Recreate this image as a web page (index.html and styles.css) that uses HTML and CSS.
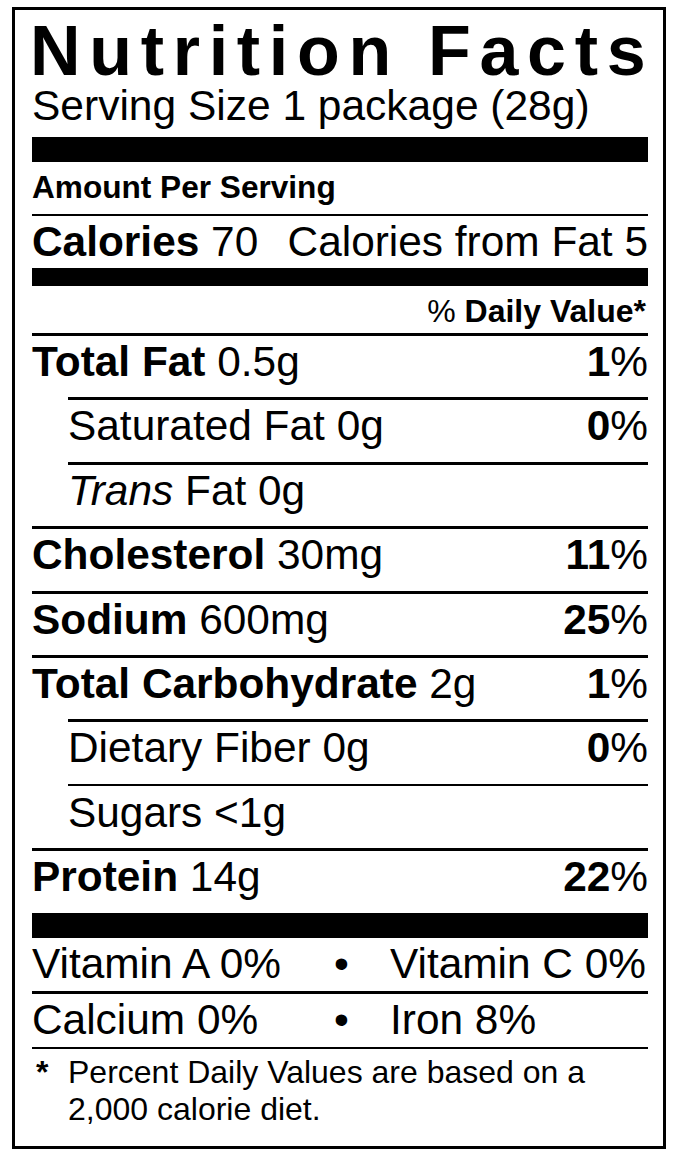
FILE: index.html
```html
<!DOCTYPE html>
<html lang="en">
<head>
<meta charset="utf-8">
<title>Nutrition Facts</title>
<link rel="stylesheet" href="styles.css">
</head>
<body>
<div class="label">
  <h1 class="title">Nutrition Facts</h1>
  <div class="serving">Serving Size 1 package (28g)</div>
  <div class="bar bar-lg bar-top"></div>
  <div class="amount">Amount Per Serving</div>
  <div class="calories"><span><b>Calories</b> 70</span><span>Calories from Fat 5</span></div>
  <div class="bar bar-md"></div>
  <div class="dv"><span class="sign">%</span> Daily Value*</div>
  <div class="row"><span><b>Total Fat</b> 0.5g</span><span><b>1</b>%</span></div>
  <div class="row sub"><span>Saturated Fat 0g</span><span><b>0</b>%</span></div>
  <div class="row sub"><span><i>Trans</i> Fat 0g</span></div>
  <div class="row"><span><b>Cholesterol</b> 30mg</span><span><b>11</b>%</span></div>
  <div class="row"><span><b>Sodium</b> 600mg</span><span><b>25</b>%</span></div>
  <div class="row"><span><b>Total Carbohydrate</b> 2g</span><span><b>1</b>%</span></div>
  <div class="row sub"><span>Dietary Fiber 0g</span><span><b>0</b>%</span></div>
  <div class="row sub thin"><span>Sugars &lt;1g</span></div>
  <div class="row"><span><b>Protein</b> 14g</span><span><b>22</b>%</span></div>
  <div class="bar bar-lg"></div>
  <div class="vit"><span>Vitamin A 0%</span><span class="dot">•</span><span>Vitamin C 0%</span></div>
  <div class="vit last"><span>Calcium 0%</span><span class="dot">•</span><span>Iron 8%</span></div>
  <div class="foot"><span class="star">*</span><p>Percent Daily Values are based on a 2,000 calorie diet.</p></div>
</div>
</body>
</html>
```

FILE: styles.css
```css
body {
  margin: 0;
  background: #fff;
  color: #000;
  font-family: "Liberation Sans", Arial, sans-serif;
}

.label {
  box-sizing: border-box;
  width: 654px;
  margin: 7px 0 0 12px;
  border: 3px solid #000;
  padding: 9px 15px 18px 17px;
}

.title {
  margin: 0 0 0 -2px;
  font-size: 70px;
  font-weight: bold;
  line-height: 64px;
  letter-spacing: 8.7px;
  white-space: nowrap;
}

.serving {
  font-size: 42.5px;
  line-height: 45px;
}

.bar {
  background: #000;
}

.bar-lg {
  height: 25px;
}

.bar-top {
  margin-top: 9px;
}

.bar-md {
  height: 18px;
  margin-top: 3px;
}

.amount {
  font-size: 31.6px;
  font-weight: bold;
  line-height: 40px;
  padding: 5px 0 7px;
  border-bottom: 2px solid #000;
}

.calories {
  display: flex;
  justify-content: space-between;
  font-size: 42.4px;
  line-height: 46px;
  padding-top: 3px;
}

.dv {
  font-size: 32px;
  font-weight: bold;
  line-height: 40px;
  padding: 5px 2px 2px 0;
  text-align: right;
}

.dv .sign {
  font-weight: normal;
}

.row {
  box-sizing: border-box;
  height: 64.4px;
  border-top: 3px solid #000;
  display: flex;
  justify-content: space-between;
  align-items: flex-start;
  font-size: 42.4px;
  line-height: 52px;
}

.row.sub {
  margin-left: 36px;
}

.row.thin {
  border-top-width: 2px;
  padding-top: 1px;
}

.vit {
  display: grid;
  grid-template-columns: 302px 56px 1fr;
  font-size: 42.4px;
  line-height: 48px;
  padding: 2px 0 3px;
  border-bottom: 3px solid #000;
  white-space: nowrap;
}

.vit.last {
  border-bottom-width: 2px;
}

.foot {
  display: flex;
  font-size: 32px;
  line-height: 37px;
  padding-top: 5px;
}

.star {
  flex: none;
  box-sizing: border-box;
  width: 36px;
  padding-left: 4px;
  font-weight: bold;
}

.foot p {
  margin: 0;
}
```
